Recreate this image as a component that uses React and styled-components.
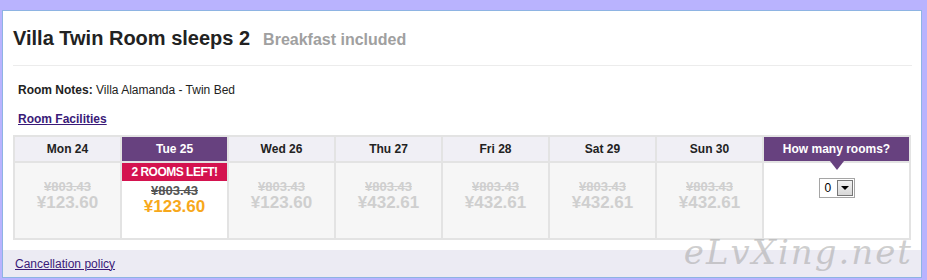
import styled, { createGlobalStyle } from "styled-components";

const days = [
  { id: "mon", label: "Mon 24", was: "¥803.43", price: "¥123.60" },
  { id: "tue", label: "Tue 25", was: "¥803.43", price: "¥123.60", left: "2 ROOMS LEFT!" },
  { id: "wed", label: "Wed 26", was: "¥803.43", price: "¥123.60" },
  { id: "thu", label: "Thu 27", was: "¥803.43", price: "¥432.61" },
  { id: "fri", label: "Fri 28", was: "¥803.43", price: "¥432.61" },
  { id: "sat", label: "Sat 29", was: "¥803.43", price: "¥432.61" },
  { id: "sun", label: "Sun 30", was: "¥803.43", price: "¥432.61" },
];

/* Styles */

const GlobalStyle = createGlobalStyle`
  html, body {
    margin: 0;
    padding: 0;
    background: #b9b3fe;
    font-family: "Liberation Sans", Arial, sans-serif;
  }
`;

const Page = styled.div`
  padding: 10px 5px 2px 2px;
  width: 920px;
  box-sizing: content-box;
`;

const Panel = styled.section`
  position: relative;
  background: #fff;
  border: 1px solid #8eb4e3;
  box-sizing: border-box;
  width: 920px;
  height: 268px;
  display: flex;
  flex-direction: column;
  overflow: hidden;
`;

const Body = styled.div`
  flex: 1;
  padding: 0 9px 0 10px;
`;

const TitleRow = styled.div`
  display: flex;
  align-items: baseline;
  gap: 13px;
  height: 55px;
  border-bottom: 1px solid #ececec;
  box-sizing: border-box;
  & h2 {
    margin: 0;
    font-size: 20px;
    line-height: 55px;
    font-weight: bold;
    color: #222;
  }
  & span {
    font-size: 16px;
    font-weight: bold;
    color: #a0a0a0;
  }
`;

const Notes = styled.p`
  margin: 17px 0 0 5px;
  font-size: 12px;
  line-height: 14px;
  color: #222;
  & strong {
    font-weight: bold;
  }
`;

const FacilitiesLink = styled.a`
  display: inline-block;
  margin: 15px 0 0 5px;
  font-size: 12px;
  line-height: 14px;
  font-weight: bold;
  color: #3a1a78;
  text-decoration: underline;
`;

const Grid = styled.div`
  margin-top: 8px;
  display: grid;
  grid-template-columns: repeat(7, 105px) 145px;
  grid-template-rows: 24px 75px;
  gap: 2px;
  padding: 2px;
  background: #e3e3e3;
  width: 898px;
  box-sizing: border-box;
`;

const DayHead = styled.div`
  background: ${(p) => (p.$active ? "#67417f" : "#f0eff5")};
  color: ${(p) => (p.$active ? "#fff" : "#222")};
  font-size: 12px;
  font-weight: bold;
  display: flex;
  align-items: center;
  justify-content: center;
  position: relative;
`;

const Pointer = styled.span`
  position: absolute;
  bottom: -9px;
  left: 50%;
  margin-left: -7px;
  border-left: 7px solid transparent;
  border-right: 7px solid transparent;
  border-top: 9px solid #67417f;
  z-index: 1;
`;

const DayBody = styled.div`
  background: ${(p) => (p.$active ? "#fff" : "#f6f6f6")};
  display: flex;
  flex-direction: column;
  align-items: center;
  padding-top: ${(p) => (p.$active ? "0" : "17px")};
`;

const LeftBadge = styled.div`
  align-self: stretch;
  height: 18px;
  background: #d4134f;
  color: #fff;
  font-size: 12px;
  letter-spacing: -0.5px;
  font-weight: bold;
  display: flex;
  align-items: center;
  justify-content: center;
  margin-bottom: 3px;
`;

const WasPrice = styled.s`
  font-size: 13px;
  line-height: 14px;
  font-weight: bold;
  color: ${(p) => (p.$active ? "#555" : "#cfcfcf")};
`;

const Price = styled.strong`
  font-size: 17px;
  line-height: 18px;
  font-weight: bold;
  color: ${(p) => (p.$active ? "#f7a81b" : "#cfcfcf")};
`;

const RoomsBody = styled.div`
  background: #fff;
  display: flex;
  justify-content: center;
  padding-top: 15px;
`;

const Select = styled.div`
  display: flex;
  align-items: center;
  justify-content: space-between;
  height: 20px;
  width: 36px;
  box-sizing: border-box;
  border: 1px solid #a5a5a5;
  padding: 0 1px 0 5px;
  font-size: 12px;
  color: #000;
  background: #fff;
`;

const SelectButton = styled.span`
  width: 16px;
  height: 16px;
  box-sizing: border-box;
  border: 1px solid #777;
  background: linear-gradient(#f2f2f2, #d8d8d8);
  display: flex;
  align-items: center;
  justify-content: center;
  &::after {
    content: "";
    border-left: 4px solid transparent;
    border-right: 4px solid transparent;
    border-top: 4px solid #000;
  }
`;

const Footer = styled.div`
  height: 27px;
  background: #ecebf3;
  display: flex;
  align-items: center;
  padding-left: 12px;
  & a {
    font-size: 12px;
    color: #3a1a78;
    text-decoration: underline;
  }
`;

const Watermark = styled.span`
  position: absolute;
  right: 8px;
  bottom: 5px;
  font-family: "DejaVu Serif", serif;
  font-style: italic;
  font-size: 34px;
  letter-spacing: 2px;
  color: rgba(160, 160, 160, 0.5);
  pointer-events: none;
`;

/* Styles */

export default function App() {
  return (
    <>
      <GlobalStyle />
      <Page>
        <Panel>
          <Body>
            <TitleRow>
              <h2>Villa Twin Room sleeps 2</h2>
              <span>Breakfast included</span>
            </TitleRow>
            <Notes>
              <strong>Room Notes:</strong> Villa Alamanda - Twin Bed
            </Notes>
            <FacilitiesLink href="#">Room Facilities</FacilitiesLink>
            <Grid>
              {days.map((d) => (
                <DayHead key={d.id} $active={!!d.left}>
                  {d.label}
                </DayHead>
              ))}
              <DayHead $active>
                How many rooms?
                <Pointer />
              </DayHead>
              {days.map((d) => (
                <DayBody key={d.id} $active={!!d.left}>
                  {d.left && <LeftBadge>{d.left}</LeftBadge>}
                  <WasPrice $active={!!d.left}>{d.was}</WasPrice>
                  <Price $active={!!d.left}>{d.price}</Price>
                </DayBody>
              ))}
              <RoomsBody>
                <Select>
                  0
                  <SelectButton />
                </Select>
              </RoomsBody>
            </Grid>
          </Body>
          <Footer>
            <a href="#">Cancellation policy</a>
          </Footer>
          <Watermark>eLvXing.net</Watermark>
        </Panel>
      </Page>
    </>
  );
}
